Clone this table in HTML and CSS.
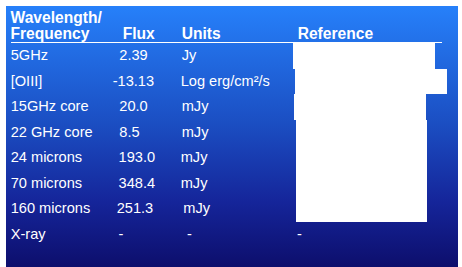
FILE: index.html
```html
<!DOCTYPE html>
<html>
<head>
<meta charset="utf-8">
<link rel="stylesheet" href="styles.css">
</head>
<body>
<div class="panel">
  <div class="head">
    <div class="h1">Wavelength/<br>Frequency</div>
    <div class="h2">Flux</div>
    <div class="h3">Units</div>
    <div class="h4">Reference</div>
  </div>
  <div class="grid">
    <div class="c1 r1">5GHz</div><div class="c2 r1">2.39</div><div class="c3 r1">Jy</div><div class="c4 r1"><span class="red red-a"></span></div>
    <div class="c1 r2">[OIII]</div><div class="c2 r2 flux-neg">-13.13</div><div class="c3 r2 unit-l">Log erg/cm²/s</div><div class="c4 r2"><span class="red red-b"></span></div>
    <div class="c1 r3">15GHz core</div><div class="c2 r3">20.0</div><div class="c3 r3">mJy</div><div class="c4 r3"><span class="red red-c"></span></div>
    <div class="c1 r4">22 GHz core</div><div class="c2 r4">8.5</div><div class="c3 r4">mJy</div><div class="c4 r4 span4"><span class="red red-d"></span></div>
    <div class="c1 r5">24 microns</div><div class="c2 r5 flux-s">193.0</div><div class="c3 r5 unit-l">mJy</div>
    <div class="c1 r6">70 microns</div><div class="c2 r6 flux-s">348.4</div><div class="c3 r6 unit-l">mJy</div>
    <div class="c1 r7">160 microns</div><div class="c2 r7 flux-l">251.3</div><div class="c3 r7 unit-r">mJy</div>
    <div class="c1 r8">X-ray</div><div class="c2 r8 flux-s">-</div><div class="c3 r8 unit-dash">-</div><div class="c4 r8">-</div>
  </div>
</div>
</body>
</html>
```
FILE: styles.css
```css
html, body {
  margin: 0;
  padding: 0;
  background: #ffffff;
}
body {
  width: 462px;
  height: 267px;
  overflow: hidden;
  font-family: "Liberation Sans", Arial, sans-serif;
  color: #ffffff;
}
.panel {
  margin: 6px 0 0 6px;
  width: 452px;
  height: 261px;
  background: linear-gradient(to bottom, #2680fa 0%, #1b4ec2 45%, #15259a 75%, #0d0e6c 100%);
  box-sizing: border-box;
  padding: 4px 0 0 4.5px;
}
.head {
  display: grid;
  grid-template-columns: 108.8px 62.4px 115.3px 1fr;
  align-items: end;
  width: 431.5px;
  border-bottom: 1.5px solid #ffffff;
  font-weight: bold;
  font-size: 15.6px;
  line-height: 16px;
}
.h1 { padding-left: 0; }
.h2 { padding-left: 3.4px; }
.h3 { padding-left: 0; }
.h4 { padding-left: 0.7px; }
.grid {
  display: grid;
  grid-template-columns: 108.8px 62.4px 115.3px 160px;
  grid-template-rows: repeat(8, 25.5px);
  font-size: 14.6px;
  line-height: 25.5px;
  white-space: nowrap;
}
.c1 { grid-column: 1; padding-left: 0.2px; }
.c2 { grid-column: 2; }
.c3 { grid-column: 3; }
.c4 { grid-column: 4; position: relative; }
.r1 { grid-row: 1; }
.r2 { grid-row: 2; }
.r3 { grid-row: 3; }
.r4 { grid-row: 4; }
.r5 { grid-row: 5; }
.r6 { grid-row: 6; }
.r7 { grid-row: 7; }
.r8 { grid-row: 8; }
.span4 { grid-row: 4 / span 4; }
.flux-neg { margin-left: -6.6px; }
.flux-s { margin-left: -0.7px; }
.flux-l { margin-left: -2.6px; }
.unit-l { margin-left: -1px; }
.unit-r { margin-left: 1.6px; }
.unit-dash { margin-left: 5.4px; }
.red {
  display: block;
  height: 100%;
  background: #ffffff;
}
.red-a { margin-left: -4px; width: 142px; }
.red-b { margin-left: -2px; width: 152px; }
.red-c { margin-left: -3px; width: 132px; }
.red-d { margin-left: -1px; width: 131px; }
```
